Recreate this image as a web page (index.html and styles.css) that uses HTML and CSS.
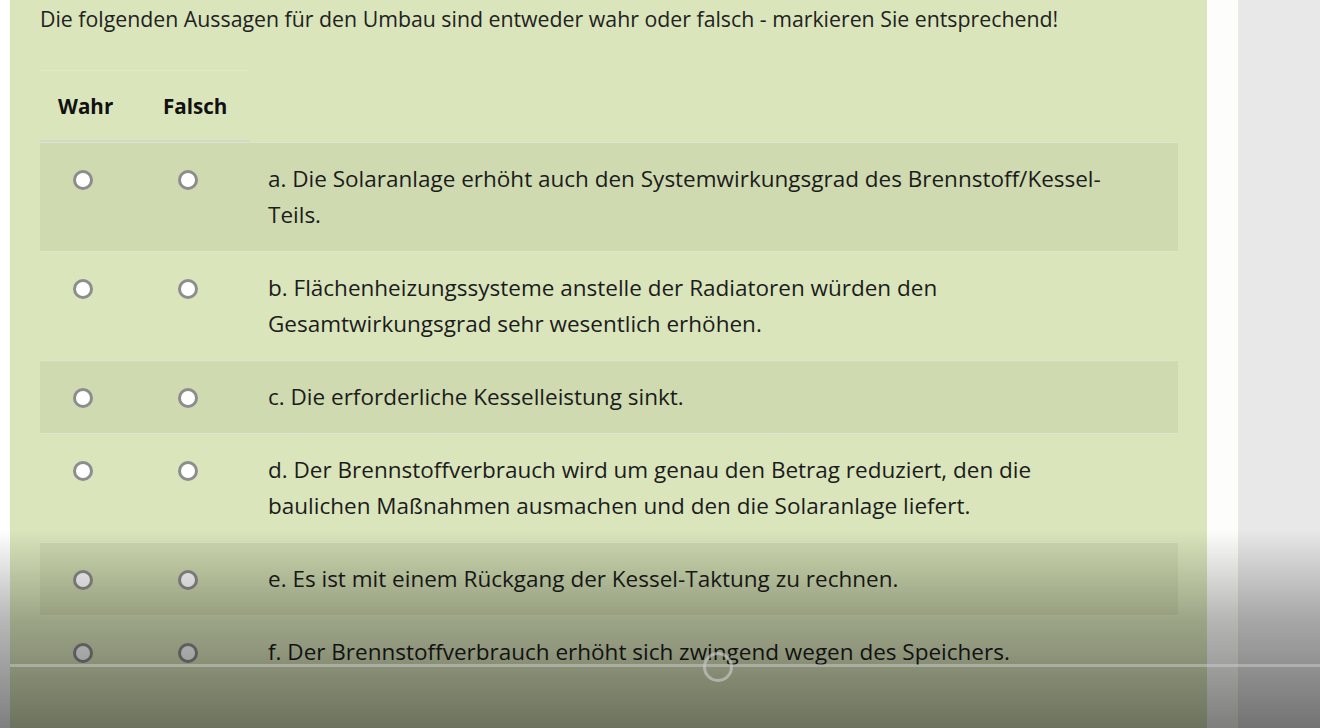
FILE: index.html
```html
<!DOCTYPE html>
<html lang="de">
<head>
<meta charset="utf-8">
<title>Wahr oder falsch</title>
<link rel="stylesheet" href="styles.css">
</head>
<body>
<div class="page">
  <div class="edge"></div>
  <main class="panel">
    <p class="prompt">Die folgenden Aussagen für den Umbau sind entweder wahr oder falsch - markieren Sie entsprechend!</p>
    <div class="matrix">
      <div class="head">
        <div class="hcell h1">Wahr</div>
        <div class="hcell h2">Falsch</div>
      </div>
      <div class="row shade">
        <div class="rcell"><span class="radio"></span></div>
        <div class="rcell"><span class="radio"></span></div>
        <div class="stmt">a. Die Solaranlage erhöht auch den Systemwirkungsgrad des Brennstoff/Kessel-Teils.</div>
      </div>
      <div class="row">
        <div class="rcell"><span class="radio"></span></div>
        <div class="rcell"><span class="radio"></span></div>
        <div class="stmt">b. Flächenheizungssysteme anstelle der Radiatoren würden den Gesamtwirkungsgrad sehr wesentlich erhöhen.</div>
      </div>
      <div class="row shade">
        <div class="rcell"><span class="radio"></span></div>
        <div class="rcell"><span class="radio"></span></div>
        <div class="stmt">c. Die erforderliche Kesselleistung sinkt.</div>
      </div>
      <div class="row">
        <div class="rcell"><span class="radio"></span></div>
        <div class="rcell"><span class="radio"></span></div>
        <div class="stmt">d. Der Brennstoffverbrauch wird um genau den Betrag reduziert, den die baulichen Maßnahmen ausmachen und den die Solaranlage liefert.</div>
      </div>
      <div class="row shade">
        <div class="rcell"><span class="radio"></span></div>
        <div class="rcell"><span class="radio"></span></div>
        <div class="stmt">e. Es ist mit einem Rückgang der Kessel-Taktung zu rechnen.</div>
      </div>
      <div class="row">
        <div class="rcell"><span class="radio"></span></div>
        <div class="rcell"><span class="radio"></span></div>
        <div class="stmt">f. Der Brennstoffverbrauch erhöht sich zwingend wegen des Speichers.</div>
      </div>
    </div>
  </main>
  <div class="gutter"></div>
  <div class="side"></div>
</div>
<div class="shadow"></div>
<div class="progress"></div>
<div class="knob"></div>
</body>
</html>
```

FILE: styles.css
```css
html, body {
  margin: 0;
  padding: 0;
  height: 100%;
  overflow: hidden;
  background: #ffffff;
}

body {
  font-family: "Open Sans", "Noto Sans", sans-serif;
  color: #1c1c1c;
}

.page {
  display: flex;
  height: 728px;
}

.edge {
  width: 10px;
  flex: none;
  background: #ffffff;
}

.panel {
  width: 1197px;
  flex: none;
  background: #dae5bc;
  padding: 0 29px 0 30px;
  box-sizing: border-box;
}

.gutter {
  width: 31px;
  flex: none;
  background: #fdfdfb;
}

.side {
  flex: 1;
  background: #e8e8e8;
}

.prompt {
  margin: 0;
  padding-top: 4px;
  font-size: 21.3px;
  line-height: 30px;
  color: #222222;
}

.matrix {
  margin-top: 36px;
}

.head {
  display: grid;
  grid-template-columns: 86px 124px;
  width: 210px;
  border-top: 1px solid #e1e8ca;
  border-bottom: 2px solid #d3d8c6;
  height: 69px;
  align-items: center;
  font-weight: 700;
  font-size: 20.6px;
  color: #111111;
}

.h1 { padding-left: 18px; }
.h2 { padding-left: 37px; }

.row {
  display: grid;
  grid-template-columns: 86px 124px 1fr;
  border-top: 1px solid #dfe4cd;
  padding: 18px 0;
}

.shade {
  background: #cfdab0;
}

.rcell {
  display: flex;
  justify-content: center;
  padding-top: 9px;
}

.radio {
  width: 14px;
  height: 14px;
  border: 3px solid #8d8d8d;
  border-radius: 50%;
  background: #ffffff;
}

.stmt {
  padding: 0 58px 0 18px;
  font-size: 22.5px;
  line-height: 36px;
}

.shadow {
  position: fixed;
  left: 0;
  right: 0;
  top: 530px;
  bottom: 0;
  background: linear-gradient(to bottom, rgba(0,0,0,0) 0%, rgba(0,0,0,0.28) 45%, rgba(0,0,0,0.5) 100%);
  pointer-events: none;
}

.progress {
  position: fixed;
  left: 10px;
  right: 0;
  top: 664px;
  height: 3px;
  background: rgba(210, 210, 210, 0.45);
}

.knob {
  position: fixed;
  left: 703px;
  top: 652px;
  width: 30px;
  height: 30px;
  border: 3px solid rgba(200, 200, 200, 0.65);
  border-radius: 50%;
  box-sizing: border-box;
}
```
